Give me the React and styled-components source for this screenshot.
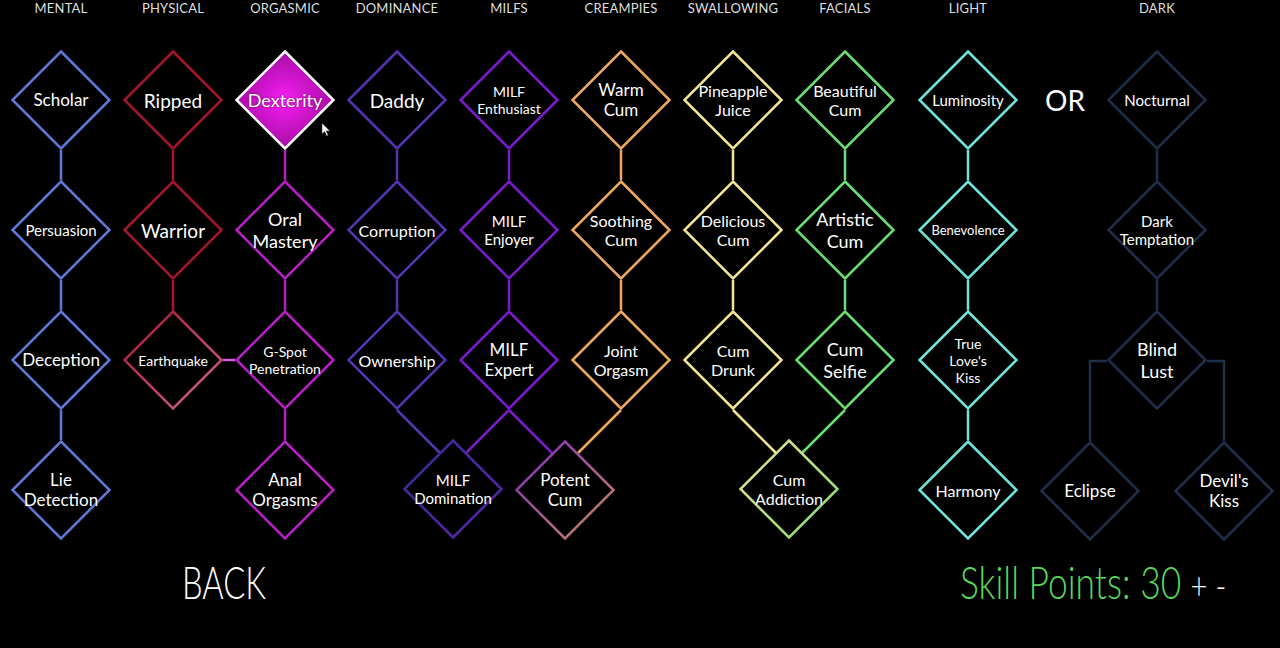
import React from "react";
import styled, { createGlobalStyle } from "styled-components";

const GlobalStyle = createGlobalStyle`
  html, body {
    margin: 0;
    padding: 0;
    background: #000;
  }
  body {
    font-family: "Lato", "Open Sans", "DejaVu Sans", sans-serif;
    color: #fff;
  }
`;

const COLORS = {
  mental: "#5f78d8",
  physical: "#a3162b",
  orgasmic: "#b51fc4",
  dominance: "#5536b0",
  milfs: "#7a1ccc",
  creampies: "#f0a85c",
  swallowing: "#f2e690",
  facials: "#68e070",
  light: "#6ee6dc",
  dark: "#1f2f4a",
};

const COLS = [61, 173, 285, 397, 509, 621, 733, 845, 968, 1157];
const ROWS = [100, 230, 360, 490];

const titles = [
  "MENTAL", "PHYSICAL", "ORGASMIC", "DOMINANCE", "MILFS",
  "CREAMPIES", "SWALLOWING", "FACIALS", "LIGHT", "DARK",
];

// gradients used by nodes sitting between two trees
const GRADIENTS = {
  quake: ["#a3162b", "#c8648e"],
  domination: ["#3c2b92", "#5a24ae"],
  potent: ["#7a28c0", "#c98a5e"],
  addiction: ["#ece28c", "#84de78"],
};

const nodes = [
  { id: "scholar", label: ["Scholar"], x: COLS[0], y: ROWS[0], color: COLORS.mental, size: 17 },
  { id: "persuasion", label: ["Persuasion"], x: COLS[0], y: ROWS[1], color: COLORS.mental, size: 15 },
  { id: "deception", label: ["Deception"], x: COLS[0], y: ROWS[2], color: COLORS.mental, size: 17 },
  { id: "lie", label: ["Lie", "Detection"], x: COLS[0], y: ROWS[3], color: COLORS.mental, size: 17 },

  { id: "ripped", label: ["Ripped"], x: COLS[1], y: ROWS[0], color: COLORS.physical, size: 19 },
  { id: "warrior", label: ["Warrior"], x: COLS[1], y: ROWS[1], color: COLORS.physical, size: 19 },
  { id: "quake", label: ["Earthquake"], x: COLS[1], y: ROWS[2], gradient: "quake", size: 14 },

  { id: "dexterity", label: ["Dexterity"], x: COLS[2], y: ROWS[0], color: "#ffffff", size: 18, active: true },
  { id: "oral", label: ["Oral", "Mastery"], x: COLS[2], y: ROWS[1], color: COLORS.orgasmic, size: 18 },
  { id: "gspot", label: ["G-Spot", "Penetration"], x: COLS[2], y: ROWS[2], color: COLORS.orgasmic, size: 14 },
  { id: "anal", label: ["Anal", "Orgasms"], x: COLS[2], y: ROWS[3], color: COLORS.orgasmic, size: 17 },

  { id: "daddy", label: ["Daddy"], x: COLS[3], y: ROWS[0], color: COLORS.dominance, size: 19 },
  { id: "corruption", label: ["Corruption"], x: COLS[3], y: ROWS[1], color: COLORS.dominance, size: 16 },
  { id: "ownership", label: ["Ownership"], x: COLS[3], y: ROWS[2], color: COLORS.dominance, size: 16 },
  { id: "domination", label: ["MILF", "Domination"], x: 453, y: 489, gradient: "domination", size: 15 },

  { id: "enthusiast", label: ["MILF", "Enthusiast"], x: COLS[4], y: ROWS[0], color: COLORS.milfs, size: 14 },
  { id: "enjoyer", label: ["MILF", "Enjoyer"], x: COLS[4], y: ROWS[1], color: COLORS.milfs, size: 15 },
  { id: "expert", label: ["MILF", "Expert"], x: COLS[4], y: ROWS[2], color: COLORS.milfs, size: 17 },

  { id: "warm", label: ["Warm", "Cum"], x: COLS[5], y: ROWS[0], color: COLORS.creampies, size: 17 },
  { id: "soothing", label: ["Soothing", "Cum"], x: COLS[5], y: ROWS[1], color: COLORS.creampies, size: 16 },
  { id: "joint", label: ["Joint", "Orgasm"], x: COLS[5], y: ROWS[2], color: COLORS.creampies, size: 16 },
  { id: "potent", label: ["Potent", "Cum"], x: 565, y: 490, gradient: "potent", size: 17 },

  { id: "pineapple", label: ["Pineapple", "Juice"], x: COLS[6], y: ROWS[0], color: COLORS.swallowing, size: 16 },
  { id: "delicious", label: ["Delicious", "Cum"], x: COLS[6], y: ROWS[1], color: COLORS.swallowing, size: 16 },
  { id: "drunk", label: ["Cum", "Drunk"], x: COLS[6], y: ROWS[2], color: COLORS.swallowing, size: 16 },
  { id: "addiction", label: ["Cum", "Addiction"], x: 789, y: 489, gradient: "addiction", size: 16 },

  { id: "beautiful", label: ["Beautiful", "Cum"], x: COLS[7], y: ROWS[0], color: COLORS.facials, size: 16 },
  { id: "artistic", label: ["Artistic", "Cum"], x: COLS[7], y: ROWS[1], color: COLORS.facials, size: 18 },
  { id: "selfie", label: ["Cum", "Selfie"], x: COLS[7], y: ROWS[2], color: COLORS.facials, size: 18 },

  { id: "luminosity", label: ["Luminosity"], x: COLS[8], y: ROWS[0], color: COLORS.light, size: 15 },
  { id: "benevolence", label: ["Benevolence"], x: COLS[8], y: ROWS[1], color: COLORS.light, size: 13 },
  { id: "truelove", label: ["True", "Love's", "Kiss"], x: COLS[8], y: ROWS[2], color: COLORS.light, size: 14 },
  { id: "harmony", label: ["Harmony"], x: COLS[8], y: ROWS[3], color: COLORS.light, size: 16 },

  { id: "nocturnal", label: ["Nocturnal"], x: COLS[9], y: ROWS[0], color: COLORS.dark, size: 15 },
  { id: "temptation", label: ["Dark", "Temptation"], x: COLS[9], y: ROWS[1], color: COLORS.dark, size: 15 },
  { id: "blind", label: ["Blind", "Lust"], x: COLS[9], y: ROWS[2], color: COLORS.dark, size: 18 },
  { id: "eclipse", label: ["Eclipse"], x: 1090, y: 491, color: COLORS.dark, size: 17 },
  { id: "devil", label: ["Devil's", "Kiss"], x: 1224, y: 491, color: COLORS.dark, size: 17 },
];

// vertical links inside a tree: [column, fromRow, toRow, colour]
const verticals = [
  [0, 0, 1, COLORS.mental], [0, 1, 2, COLORS.mental], [0, 2, 3, COLORS.mental],
  [1, 0, 1, COLORS.physical], [1, 1, 2, COLORS.physical],
  [2, 0, 1, COLORS.orgasmic], [2, 1, 2, COLORS.orgasmic], [2, 2, 3, COLORS.orgasmic],
  [3, 0, 1, COLORS.dominance], [3, 1, 2, COLORS.dominance],
  [4, 0, 1, COLORS.milfs], [4, 1, 2, COLORS.milfs],
  [5, 0, 1, COLORS.creampies], [5, 1, 2, COLORS.creampies],
  [6, 0, 1, COLORS.swallowing], [6, 1, 2, COLORS.swallowing],
  [7, 0, 1, COLORS.facials], [7, 1, 2, COLORS.facials],
  [8, 0, 1, COLORS.light], [8, 1, 2, COLORS.light], [8, 2, 3, COLORS.light],
  [9, 0, 1, COLORS.dark], [9, 1, 2, COLORS.dark],
];

// other links as polylines
const links = [
  { pts: "223,360 235,360", color: "#e055e0" },
  { pts: "397,410 439.5,452.5", color: COLORS.dominance },
  { pts: "509,410 466.5,452.5", color: COLORS.milfs },
  { pts: "509,410 552,453", color: COLORS.milfs },
  { pts: "621,410 578,453", color: COLORS.creampies },
  { pts: "733,410 776,453", color: COLORS.swallowing },
  { pts: "845,410 802,453", color: COLORS.facials },
  { pts: "1107,361 1090,361 1090,441", color: COLORS.dark },
  { pts: "1207,361 1224,361 1224,441", color: COLORS.dark },
];

const Page = styled.div`
  width: 1280px;
  height: 648px;
  background: #000;
  display: flex;
  flex-direction: column;
  overflow: hidden;
`;

const Canvas = styled.div`
  position: relative;
  height: 548px;
  flex: none;
`;

const Wires = styled.svg`
  position: absolute;
  inset: 0;
  width: 1280px;
  height: 548px;
`;

const ColumnTitle = styled.div`
  position: absolute;
  top: 0;
  transform: translateX(-50%);
  font-size: 13px;
  line-height: 16px;
  color: #dedede;
  letter-spacing: 0.2px;
  white-space: nowrap;
`;

const NodeBox = styled.div`
  position: absolute;
  width: 100px;
  height: 100px;
  display: flex;
  align-items: center;
  justify-content: center;
`;

const Shape = styled.svg`
  position: absolute;
  inset: 0;
  width: 100px;
  height: 100px;
  overflow: visible;
`;

const Label = styled.div`
  position: relative;
  text-align: center;
  color: #fff;
  font-size: ${(p) => p.$size}px;
  line-height: ${(p) => Math.round(p.$size * 1.2)}px;
  white-space: nowrap;
  text-shadow: 0 0 2px rgba(0, 0, 0, 0.6);
`;

const OrText = styled.div`
  position: absolute;
  left: 1065px;
  top: 100px;
  transform: translate(-50%, -50%);
  font-size: 28px;
  color: #fff;
`;

const Cursor = styled.svg`
  position: absolute;
  left: 321px;
  top: 122px;
  width: 10px;
  height: 15px;
`;

const Footer = styled.div`
  display: grid;
  grid-template-columns: 778px auto;
  padding: 11px 0 0 182px;
  align-items: start;
`;

const Condensed = styled.div`
  font-family: "Lato", "Open Sans", sans-serif;
  font-weight: 300;
  font-size: 46px;
  line-height: 46px;
  transform: scaleX(${(p) => p.$scale});
  transform-origin: left center;
  white-space: nowrap;
  color: ${(p) => p.$color};
`;

const Plus = styled.span`
  color: #fff;
  font-size: 38px;
  margin-left: 12px;
`;

function Node({ node }) {
  const points = "50,1.5 98.5,50 50,98.5 1.5,50";
  const stroke = node.gradient ? `url(#g-${node.id})` : node.color;
  return (
    <NodeBox style={{ left: node.x - 50, top: node.y - 50 }}>
      <Shape viewBox="0 0 100 100">
        <defs>
          {node.gradient && (
            <linearGradient id={`g-${node.id}`} x1="0" y1="0" x2="1" y2="1">
              <stop offset="0" stopColor={GRADIENTS[node.gradient][0]} />
              <stop offset="1" stopColor={GRADIENTS[node.gradient][1]} />
            </linearGradient>
          )}
          {node.active && (
            <radialGradient id={`f-${node.id}`} cx="0.5" cy="0.5" r="0.55">
              <stop offset="0" stopColor="#f61ef4" />
              <stop offset="1" stopColor="#a00a9c" />
            </radialGradient>
          )}
        </defs>
        <polygon
          points={points}
          fill={node.active ? `url(#f-${node.id})` : "#000"}
          stroke={stroke}
          strokeWidth="2.5"
          strokeLinejoin="miter"
        />
      </Shape>
      <Label $size={node.size}>
        {node.label.map((line) => (
          <div key={line}>{line}</div>
        ))}
      </Label>
    </NodeBox>
  );
}

export default function App() {
  return (
    <Page>
      <GlobalStyle />
      <Canvas>
        <Wires viewBox="0 0 1280 548">
          {verticals.map(([c, a, b, color], i) => (
            <line
              key={i}
              x1={COLS[c]}
              y1={ROWS[a] + 50}
              x2={COLS[c]}
              y2={ROWS[b] - 50}
              stroke={color}
              strokeWidth="2.5"
            />
          ))}
          {links.map((l, i) => (
            <polyline key={i} points={l.pts} fill="none" stroke={l.color} strokeWidth="2.5" />
          ))}
        </Wires>

        {titles.map((t, i) => (
          <ColumnTitle key={t} style={{ left: COLS[i] }}>
            {t}
          </ColumnTitle>
        ))}

        {nodes.map((n) => (
          <Node key={n.id} node={n} />
        ))}

        <OrText>OR</OrText>

        <Cursor viewBox="0 0 10 15">
          <path d="M1 1 L1 12 L3.6 9.6 L5.6 14 L7.2 13.3 L5.3 9 L8.8 9 Z" fill="#fff" stroke="#333" strokeWidth="0.6" />
        </Cursor>
      </Canvas>

      <Footer>
        <Condensed $scale={0.71} $color="#fff">BACK</Condensed>
        <Condensed $scale={0.77} $color="#58d858">
          Skill Points: 30<Plus>+ -</Plus>
        </Condensed>
      </Footer>
    </Page>
  );
}
